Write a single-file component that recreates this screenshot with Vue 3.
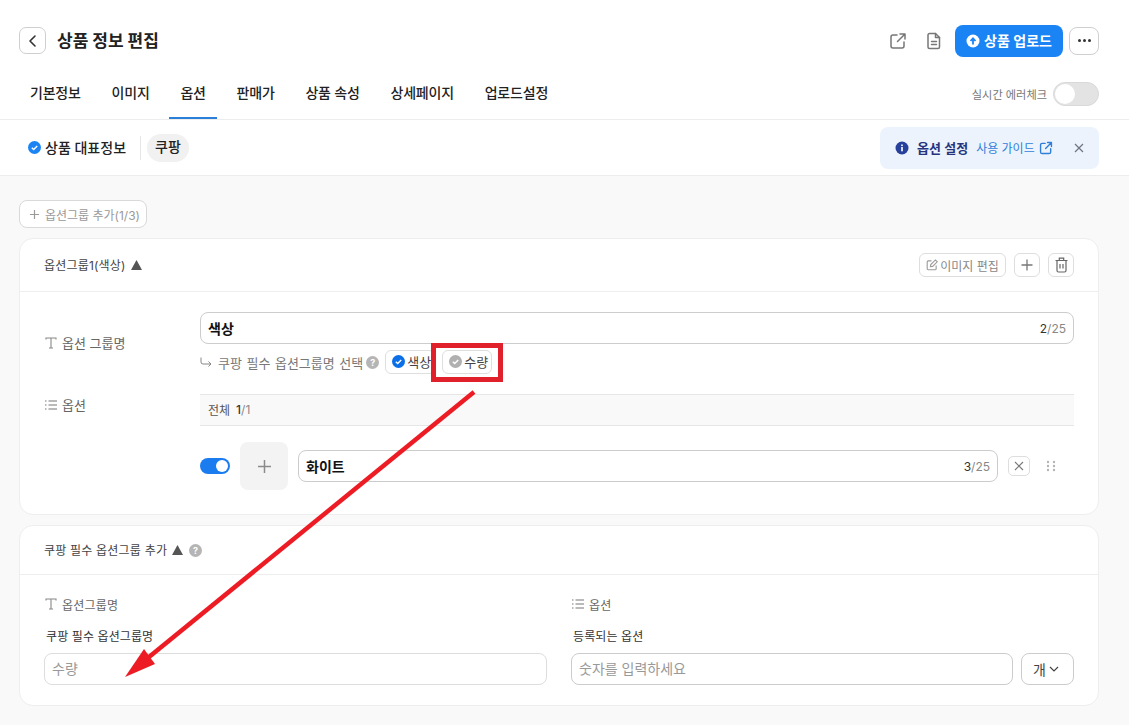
<script setup>
const tabs = ['기본정보', '이미지', '옵션', '판매가', '상품 속성', '상세페이지', '업로드설정']
</script>

<template>
  <div class="page">
    <header class="top">
      <div class="title-row">
        <button class="back">
          <svg width="16" height="16" viewBox="0 0 16 16" fill="none" stroke="#333" stroke-width="1.6" stroke-linecap="round" stroke-linejoin="round"><path d="M10 3 5 8l5 5" /></svg>
        </button>
        <h1>상품 정보 편집</h1>
        <div class="actions">
          <svg class="ic-share" width="18" height="18" viewBox="0 0 18 18" fill="none" stroke="#777" stroke-width="1.5" stroke-linecap="round" stroke-linejoin="round"><path d="M8 3H4a2 2 0 0 0-2 2v9a2 2 0 0 0 2 2h9a2 2 0 0 0 2-2v-4" /><path d="M11 2h5v5M16 2 8.5 9.500" /></svg>
          <svg class="ic-doc" width="18" height="18" viewBox="0 0 18 18" fill="none" stroke="#777" stroke-width="1.500" stroke-linecap="round" stroke-linejoin="round"><path d="M4.500 1.500h6l4 4V15a1.500 1.500 0 0 1-1.500 1.500H4.500A1.500 1.500 0 0 1 3 15V3a1.500 1.500 0 0 1 1.500-1.500Z" /><path d="M6.500 9.500h5M6.500 12.500h5M10.500 1.500v4h4" /></svg>
          <button class="upload">
            <svg width="14" height="14" viewBox="0 0 14 14"><circle cx="7" cy="7" r="6.500" fill="#fff" /><path d="M7 10.500V5M4.500 7 7 4.300 9.500 7" fill="none" stroke="#1b84f5" stroke-width="1.800" /></svg>
            <span>상품 업로드</span>
          </button>
          <button class="more"><i></i><i></i><i></i></button>
        </div>
      </div>
      <div class="tab-row">
        <nav class="tabs">
          <span v-for="t in tabs" :key="t" class="tab" :class="{ active: t === '옵션' }">{{ t }}</span>
        </nav>
        <div class="live">
          <span>실시간 에러체크</span>
          <span class="switch-off"><b></b></span>
        </div>
      </div>
    </header>

    <section class="subbar">
      <div class="sub-left">
        <svg width="13" height="13" viewBox="0 0 13 13"><circle cx="6.500" cy="6.500" r="6.500" fill="#1b84f5" /><path d="m3.800 6.700 1.900 1.800 3.500-3.600" fill="none" stroke="#fff" stroke-width="1.400" /></svg>
        <span class="rep">상품 대표정보</span>
        <span class="vsep"></span>
        <span class="chip">쿠팡</span>
      </div>
      <div class="guide">
        <svg width="14" height="14" viewBox="0 0 14 14"><circle cx="7" cy="7" r="6.500" fill="#27409c" /><rect x="6.200" y="6" width="1.600" height="4.300" fill="#fff" /><rect x="6.200" y="3.500" width="1.600" height="1.600" fill="#fff" /></svg>
        <strong>옵션 설정</strong>
        <span class="guide-link">사용 가이드</span>
        <svg width="14" height="14" viewBox="0 0 18 18" fill="none" stroke="#2f7fd8" stroke-width="1.800" stroke-linecap="round" stroke-linejoin="round"><path d="M8 3H4a2 2 0 0 0-2 2v9a2 2 0 0 0 2 2h9a2 2 0 0 0 2-2v-4" /><path d="M11 2h5v5M16 2 8.500 9.500" /></svg>
        <svg class="guide-x" width="10" height="10" viewBox="0 0 10 10" fill="none" stroke="#6f7480" stroke-width="1.200"><path d="m1 1 8 8M9 1 1 9" /></svg>
      </div>
    </section>

    <main class="body">
      <button class="add-group">
        <svg width="11" height="11" viewBox="0 0 12 12" stroke="#9a9a9a" stroke-width="1.300"><path d="M6 1v10M1 6h10" /></svg>
        <span>옵션그룹 추가(1/3)</span>
      </button>

      <section class="card card-one">
        <div class="card-head">
          <span class="head-title">옵션그룹1(색상)</span>
          <svg class="tri" width="11" height="10" viewBox="0 0 11 10"><path d="M5.500 0 11 10H0Z" fill="#555" /></svg>
          <div class="head-actions">
            <button class="mini edit">
              <svg width="12" height="12" viewBox="0 0 13 13" fill="none" stroke="#9a9a9a" stroke-width="1.200"><path d="M6 2H2.500A1.200 1.200 0 0 0 1.300 3.200v7.300a1.200 1.200 0 0 0 1.200 1.200h7.300a1.200 1.200 0 0 0 1.200-1.200V7" /><path d="M4.800 8.300 5.200 6l5-5 2 2-5 5Z" /></svg>
              <span>이미지 편집</span>
            </button>
            <button class="mini square">
              <svg width="14" height="14" viewBox="0 0 14 14" stroke="#777" stroke-width="1.300"><path d="M7 1.500v11M1.500 7h11" /></svg>
            </button>
            <button class="mini square">
              <svg width="15" height="16" viewBox="0 0 15 16" fill="none" stroke="#666" stroke-width="1.200"><path d="M1.500 3.500h12M5.300 3.300V1.200h4.400v2.100M3 3.500v10a1.500 1.500 0 0 0 1.500 1.500h6a1.500 1.500 0 0 0 1.500-1.500v-10M6 7v4.500M9 7v4.500" /></svg>
            </button>
          </div>
        </div>
        <div class="card-one-body">
          <div class="field-grid">
            <div class="label label-name">
              <svg class="t-ic" width="12" height="12" viewBox="0 0 12 12" fill="none" stroke="#888" stroke-width="1.100"><path d="M1 2.500V1h10v1.500M6 1v10M4 11h4" /></svg>
              <span>옵션 그룹명</span>
            </div>
            <div>
              <div class="input strong">
                <span class="val">색상</span>
                <span class="count"><em>2</em>/25</span>
              </div>
              <div class="required">
                <svg width="12" height="12" viewBox="0 0 12 12" fill="none" stroke="#888" stroke-width="1"><path d="M1 1.500V6a2 2 0 0 0 2 2h8M8.500 5.500 11 8l-2.500 2.500" /></svg>
                <span class="req-text">쿠팡 필수 옵션그룹명 선택</span>
                <span class="help">?</span>
                <span class="pick">
                  <svg width="13" height="13" viewBox="0 0 13 13"><circle cx="6.500" cy="6.500" r="6.500" fill="#0b6fe8" /><path d="m3.800 6.700 1.900 1.800 3.500-3.600" fill="none" stroke="#fff" stroke-width="1.400" /></svg>
                  색상
                </span>
                <span class="pick off">
                  <svg width="13" height="13" viewBox="0 0 13 13"><circle cx="6.500" cy="6.500" r="6.500" fill="#b0b0b0" /><path d="m3.800 6.700 1.900 1.800 3.500-3.600" fill="none" stroke="#fff" stroke-width="1.400" /></svg>
                  수량
                </span>
              </div>
            </div>
            <div class="label label-opt">
              <svg width="12" height="10" viewBox="0 0 12 10" stroke="#777" stroke-width="1.200"><path d="M3.500 1H12M3.500 5H12M3.500 9H12M0 1h1.500M0 5h1.500M0 9h1.500" /></svg>
              <span>옵션</span>
            </div>
            <div>
              <div class="table-head"><span>전체</span><b>1</b><span class="of">/1</span></div>
              <div class="opt-row">
                <span class="switch-on"><b></b></span>
                <span class="plus-box">
                  <svg width="15" height="15" viewBox="0 0 15 15" stroke="#8a8a8a" stroke-width="1.500"><path d="M7.500 1v13M1 7.500h13" /></svg>
                </span>
                <div class="input strong grow">
                  <span class="val">화이트</span>
                  <span class="count"><em>3</em>/25</span>
                </div>
                <button class="remove">
                  <svg width="10" height="10" viewBox="0 0 10 10" fill="none" stroke="#777" stroke-width="1.100"><path d="m1 1 8 8M9 1 1 9" /></svg>
                </button>
                <svg class="dots" width="10" height="12" viewBox="0 0 10 12" fill="#b5b5b5"><circle cx="2" cy="2" r="1.200" /><circle cx="8" cy="2" r="1.200" /><circle cx="2" cy="6" r="1.200" /><circle cx="8" cy="6" r="1.200" /><circle cx="2" cy="10" r="1.200" /><circle cx="8" cy="10" r="1.200" /></svg>
              </div>
            </div>
          </div>
        </div>
      </section>

      <section class="card card-two">
        <div class="card-head two">
          <span class="head-title">쿠팡 필수 옵션그룹 추가</span>
          <svg class="tri" width="11" height="10" viewBox="0 0 11 10"><path d="M5.500 0 11 10H0Z" fill="#555" /></svg>
          <span class="help head-help">?</span>
        </div>
        <div class="two-cols">
          <div class="col">
            <div class="label small">
              <svg class="t-ic" width="12" height="12" viewBox="0 0 12 12" fill="none" stroke="#888" stroke-width="1.100"><path d="M1 2.500V1h10v1.500M6 1v10M4 11h4" /></svg>
              <span>옵션그룹명</span>
            </div>
            <div class="sub-label">쿠팡 필수 옵션그룹명</div>
            <div class="input light"><span class="ph">수량</span></div>
          </div>
          <div class="col">
            <div class="label small">
              <svg width="12" height="10" viewBox="0 0 12 10" stroke="#777" stroke-width="1.200"><path d="M3.500 1H12M3.500 5H12M3.500 9H12M0 1h1.500M0 5h1.500M0 9h1.500" /></svg>
              <span>옵션</span>
            </div>
            <div class="sub-label">등록되는 옵션</div>
            <div class="unit-row">
              <div class="input grow"><span class="ph">숫자를 입력하세요</span></div>
              <div class="input unit">
                <span>개</span>
                <svg width="10" height="6" viewBox="0 0 10 6" fill="none" stroke="#444" stroke-width="1.200"><path d="m1 1 4 4 4-4" /></svg>
              </div>
            </div>
          </div>
        </div>
      </section>
    </main>

    <svg class="annotation" width="1129" height="725" viewBox="0 0 1129 725">
      <rect x="433.500" y="345.500" width="67" height="34" fill="none" stroke="#e0202a" stroke-width="5" />
      <path d="M474 392 149 657" stroke="#ed1c24" stroke-width="4.500" fill="none" />
      <path d="M125 677 144 649 155 664Z" fill="#ed1c24" />
    </svg>
  </div>
</template>

<style>
html, body { margin: 0; background: #fff; }
</style>

<style scoped>
* { box-sizing: border-box; }
.page {
  position: relative;
  width: 1129px;
  height: 725px;
  overflow: hidden;
  background: #f9f9f9;
  color: #222;
  font-family: Inter, "Noto Sans CJK KR", "Noto Sans", sans-serif;
}
button { font-family: inherit; background: #fff; padding: 0; cursor: pointer; }
svg { flex: none; display: block; }

.top { background: #fff; height: 120px; border-bottom: 1px solid #ececec; padding: 0 30px 0 19px; }
.title-row { display: flex; align-items: center; height: 81px; }
.back { width: 27px; height: 27px; border: 1px solid #cfcfcf; border-radius: 7px; display: flex; align-items: center; justify-content: center; }
h1 { margin: 0 0 2px 11px; font-size: 17px; font-weight: 700; color: #222; }
.actions { margin-left: auto; display: flex; align-items: center; }
.ic-doc { margin-left: 18px; }
.upload { margin-left: 12px; width: 108px; height: 32px; background: #1b84f5; border: 0; border-radius: 8px; color: #fff; font-size: 14px; font-weight: 600; display: flex; align-items: center; justify-content: center; gap: 4px; }
.upload span { padding-bottom: 1px; }
.more { margin-left: 6px; width: 30px; height: 28px; border: 1px solid #cfcfcf; border-radius: 8px; display: flex; align-items: center; justify-content: center; gap: 2px; }
.more i { width: 3px; height: 3px; border-radius: 50%; background: #333; }

.tab-row { display: flex; align-items: stretch; justify-content: space-between; height: 38px; }
.tabs { display: flex; gap: 8.800px; }
.tab { padding: 1px 11px 0; font-size: 14px; font-weight: 500; letter-spacing: -0.2px; line-height: 22px; color: #222; height: 38px; }
.tab.active { border-bottom: 2px solid #2a80d8; }
.live { display: flex; align-items: center; gap: 6px; font-size: 11.200px; color: #777; padding-bottom: 13px; }
.switch-off { width: 46px; height: 24px; border-radius: 12px; background: #e3e3e3; padding: 1px; border: 1px solid #d9d9d9; }
.switch-off b { display: block; width: 20px; height: 20px; border-radius: 50%; background: #fff; }

.subbar { height: 56px; background: #fff; border-bottom: 1px solid #ececec; display: flex; align-items: center; justify-content: space-between; padding: 0 30px 0 28px; }
.sub-left { display: flex; align-items: center; }
.rep { margin-left: 4px; padding-bottom: 2px; font-size: 14px; font-weight: 500; }
.vsep { width: 1px; height: 24px; background: #e6e6e6; margin: 0 6px 0 14px; }
.chip { background: #f1f1f1; border-radius: 14px; height: 28px; padding: 0 8px; font-size: 14px; font-weight: 500; line-height: 26px; }
.guide { width: 219px; height: 42px; border-radius: 8px; background: #edf3fd; padding: 0 15px; display: flex; align-items: center; }
.guide strong { margin-left: 8px; font-size: 13px; font-weight: 600; color: #26347e; }
.guide-link { margin: 0 4px 0 8px; font-size: 12px; color: #2f7fd8; }
.guide-x { margin-left: auto; }

.body { padding: 24px 30px 0 19px; }
.add-group { display: flex; align-items: center; gap: 5px; height: 28px; width: 128px; padding-left: 9px; border: 1px solid #d9d9d9; border-radius: 8px; font-size: 12px; color: #999; }
.card { background: #fff; border: 1px solid #eeeeee; border-radius: 14px; width: 1080px; }
.card-one { margin-top: 10px; height: 277px; }
.card-two { margin-top: 10px; height: 181px; }
.card-head { height: 53px; border-bottom: 1px solid #eeeeee; padding: 0 24px; display: flex; align-items: center; }
.card-head.two { height: 49px; }
.head-title { font-size: 12px; letter-spacing: 0.2px; color: #444; padding-bottom: 2px; }
.tri { margin-left: 5px; }
.head-actions { margin-left: auto; display: flex; align-items: center; gap: 8px; }
.mini { height: 24px; border: 1px solid #dedede; border-radius: 6px; display: flex; align-items: center; justify-content: center; }
.mini.edit { width: 87px; gap: 2px; font-size: 12px; color: #888; }
.mini.square { width: 26px; }

.card-one-body { padding: 20px 24px 0; }
.field-grid { display: grid; grid-template-columns: 156px 1fr; row-gap: 20px; }
.label { display: flex; align-items: center; gap: 5px; padding-left: 1px; font-size: 13px; color: #666; }
.label-name { align-self: start; margin-top: 21px; }
.label-opt { align-self: start; height: 21px; }
.input { height: 32px; border: 1px solid #cccccc; border-radius: 8px; background: #fff; padding: 0 7px; display: flex; align-items: center; justify-content: space-between; font-size: 14px; }
.input.strong .val { font-weight: 700; color: #111; }
.count { font-size: 12px; color: #888; }
.count em { font-style: normal; color: #333; }
.required { display: flex; align-items: center; height: 24px; margin-top: 6px; font-size: 13px; color: #777; }
.req-text { margin-left: 6px; word-spacing: 0.900px; }
.help { width: 13px; height: 13px; margin-left: 3px; border-radius: 50%; background: #b5b5b5; color: #fff; font-size: 9px; font-weight: 700; line-height: 13px; text-align: center; }
.help.head-help { margin-left: 6px; }
.pick { margin-left: 6px; width: 50px; height: 24px; border: 1px solid #dfdfdf; border-radius: 6px; padding: 0 0 1px 6px; display: flex; align-items: center; gap: 2px; color: #444; font-size: 13px; }
.pick.off { margin-left: 7px; border-color: #dedede; }
.table-head { height: 32px; background: #f9f9f9; border-top: 1px solid #e6e6e6; border-bottom: 1px solid #e6e6e6; padding: 0 8px 1px; display: flex; align-items: center; font-size: 12px; color: #555; }
.table-head b { margin-left: 6px; font-weight: 500; color: #333; }
.table-head .of { color: #888; }
.opt-row { display: flex; align-items: center; height: 48px; margin-top: 16px; }
.switch-on { width: 30px; height: 16px; border-radius: 8px; background: #1b7cf0; padding: 2px; display: flex; justify-content: flex-end; }
.switch-on b { width: 12px; height: 12px; border-radius: 50%; background: #fff; }
.plus-box { margin-left: 10px; width: 48px; height: 48px; border-radius: 8px; background: #f3f3f3; display: flex; align-items: center; justify-content: center; }
.grow { flex: 1; }
.opt-row .input { margin-left: 10px; }
.remove { margin-left: 10px; width: 22px; height: 20px; border: 1px solid #dedede; border-radius: 5px; display: flex; align-items: center; justify-content: center; }
.dots { margin: 0 18px 0 16px; }

.two-cols { display: grid; grid-template-columns: 503px 503px; gap: 24px; padding: 19px 24px 0; }
.label.small { height: 20px; font-size: 12px; letter-spacing: 0.2px; }
.sub-label { margin-top: 13px; font-size: 12px; letter-spacing: 0.1px; color: #333; line-height: 20px; padding-left: 2px; }
.col .input { margin-top: 6px; }
.input.light { border-color: #dddddd; }
.ph { color: #999; font-size: 14px; padding-bottom: 2px; }
.unit-row { display: flex; gap: 8px; }
.unit { width: 53px; flex: none; padding: 0 14px 0 11px; color: #444; }
.annotation { position: absolute; left: 0; top: 0; pointer-events: none; }
</style>
